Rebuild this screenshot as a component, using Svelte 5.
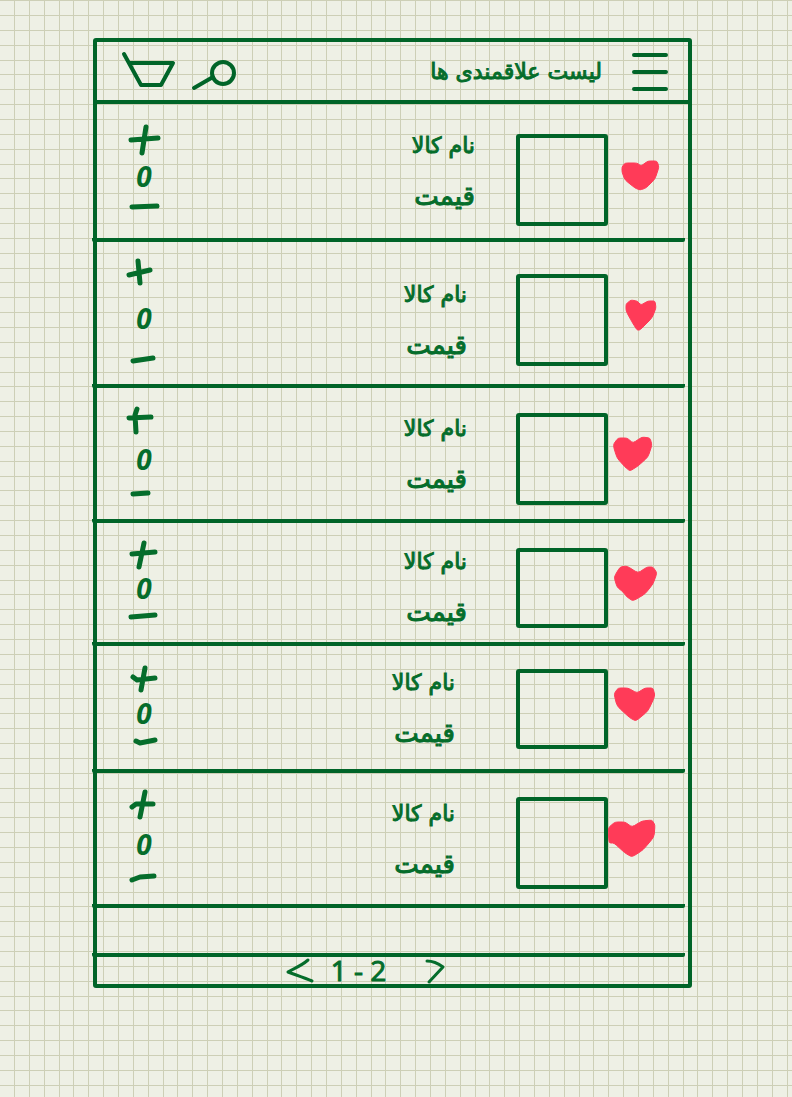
<script>
  const products = [
    {
      thumb: 92, drop: 18, textDrop: 0, gap: 41, step: 92,
      heart: [[14,16],[17,12],[29,12],[33,15],[40,10],[49,10],[51,16],[47,28],[38,37],[32,39],[27,37],[17,29],[14,21]],
      plus: 'M20 2 16 28M5 15 32 13', minus: 'M6 10 31 9'
    },
    {
      thumb: 92, drop: 14, textDrop: 14, gap: 49, step: 112,
      heart: [[18,13],[23,9],[29,10],[33,14],[40,10],[47,10],[48,17],[44,27],[32,39],[29,39],[24,31],[18,20]],
      plus: 'M12 4 14 26M3 18 24 13', minus: 'M7 12 27 9'
    },
    {
      thumb: 92, drop: 10, textDrop: 0, gap: 49, step: 98,
      heart: [[5,15],[10,8],[19,8],[25,13],[34,7],[42,8],[44,15],[40,27],[30,36],[22,41],[17,37],[9,28]],
      plus: 'M11 4 9 10 10 27M3 13 25 12', minus: 'M7 11 22 10'
    },
    {
      thumb: 80, drop: 10, textDrop: 8, gap: 49, step: 86,
      heart: [[6,18],[12,8],[19,7],[30,14],[39,8],[45,8],[49,14],[45,25],[37,35],[25,42],[19,38],[15,33],[9,28]],
      plus: 'M18 3 13 27M6 14 29 12', minus: 'M5 11 29 9'
    },
    {
      thumb: 80, drop: 2, textDrop: 0, gap: 61, step: 88,
      heart: [[6,14],[10,8],[20,8],[29,13],[37,8],[45,8],[47,16],[40,31],[28,41],[22,38],[9,26]],
      plus: 'M19 4 15 26M7 13 11 16 29 14', minus: 'M10 9 14 11 29 8'
    },
    {
      thumb: 92, drop: 8, textDrop: 0, gap: 61, step: 98,
      heart: [[0,14],[7,8],[17,8],[24,13],[34,7],[44,6],[47,11],[46,23],[35,36],[24,43],[17,39],[6,29],[1,29]],
      plus: 'M19 2 14 27M6 17 10 14 27 14', minus: 'M6 12 14 9 28 8'
    }
  ];

  // Closed outline whose corners are rounded over a quarter of each side.
  function blob(points) {
    const n = points.length;
    const toward = (a, b) => `${a[0] + (b[0] - a[0]) / 4} ${a[1] + (b[1] - a[1]) / 4}`;
    return points
      .map((p, i) => {
        const before = points[(i + n - 1) % n];
        const after = points[(i + 1) % n];
        return `${i ? 'L' : 'M'}${toward(p, before)}Q${p[0]} ${p[1]} ${toward(p, after)}`;
      })
      .join('') + 'Z';
  }

  let counts = $state(products.map(() => 0));
</script>

<main lang="fa" dir="rtl">
  <div class="frame">
    <header>
      <button class="menu" aria-label="منو">
        <svg width="36" height="40" viewBox="0 0 36 40"><path d="M2 3H34M2 20H34M2 37H34" /></svg>
      </button>
      <h1>لیست علاقمندی ها</h1>
      <button aria-label="جستجو">
        <svg width="46" height="40" viewBox="0 0 46 40"><circle cx="32" cy="21" r="11" /><path d="M22 25 3 36" /></svg>
      </button>
      <button aria-label="سبد خرید">
        <svg width="56" height="40" viewBox="0 0 56 40"><path d="M3 2 20 33H40L52 11H9" /></svg>
      </button>
    </header>

    <ul>
      {#each products as item, i}
        <li>
          <div class="media" style:padding-top="{item.drop}px">
            <button class="heart" aria-label="علاقمندی">
              <svg width="56" height="48" viewBox="0 0 56 48"><path d={blob(item.heart)} /></svg>
            </button>
            <div class="thumb" style:height="{item.thumb}px"></div>
          </div>
          <div class="text" style:padding-top="{item.textDrop}px" style:margin-right="{item.gap}px">
            <h2>نام کالا</h2>
            <p>قیمت</p>
          </div>
          <div class="stepper" style:height="{item.step}px">
            <button aria-label="افزایش" onclick={() => counts[i]++}>
              <svg width="36" height="30" viewBox="0 0 36 30"><path d={item.plus} /></svg>
            </button>
            <output>{counts[i]}</output>
            <button aria-label="کاهش" onclick={() => (counts[i] = Math.max(0, counts[i] - 1))}>
              <svg width="36" height="20" viewBox="0 0 36 20"><path d={item.minus} /></svg>
            </button>
          </div>
        </li>
      {/each}
      <li class="blank"></li>
    </ul>

    <nav dir="ltr">
      <button aria-label="صفحه قبل">
        <svg width="30" height="24" viewBox="0 0 30 24"><path d="M23 1C15 8 7 10 3 13C11 16 20 19 27 22" /></svg>
      </button>
      <span>1 - 2</span>
      <button aria-label="صفحه بعد">
        <svg width="22" height="26" viewBox="0 0 22 26"><path d="M3 3C8 3 15 6 19 9L5 24" /></svg>
      </button>
    </nav>
  </div>
</main>

<style>
  :global(body) {
    margin: 0;
    background-color: #eef0e5;
    /* Squared paper: seven cells for every 104 pixels */
    background-image:
      linear-gradient(to right, transparent 14px, #cdcfb6 14px 15px, transparent 15px 29px, #cdcfb6 29px 30px, transparent 30px 44px, #cdcfb6 44px 45px, transparent 45px 59px, #cdcfb6 59px 60px, transparent 60px 73px, #cdcfb6 73px 74px, transparent 74px 88px, #cdcfb6 88px 89px, transparent 89px 103px, #cdcfb6 103px 104px),
      linear-gradient(to bottom, #cdcfb6 0 1px, transparent 1px 15px, #cdcfb6 15px 16px, transparent 16px 30px, #cdcfb6 30px 31px, transparent 31px 45px, #cdcfb6 45px 46px, transparent 46px 60px, #cdcfb6 60px 61px, transparent 61px 74px, #cdcfb6 74px 75px, transparent 75px 89px, #cdcfb6 89px 90px, transparent 90px);
    background-size: 104px 104px;
  }
  main {
    --line: #006428;
    --ink: #056d2b;
    padding: 38px 100px 109px 93px;
    color: var(--ink);
    font-family: "DejaVu Sans", sans-serif;
  }
  .frame {
    border: 4px solid var(--line);
    border-radius: 3px;
  }
  button {
    display: block;
    padding: 0;
    border: 0;
    background: none;
    color: inherit;
    cursor: pointer;
  }
  svg {
    display: block;
    fill: none;
    stroke: var(--ink);
    stroke-width: 4;
    stroke-linecap: round;
    stroke-linejoin: round;
    overflow: visible;
  }
  header svg { stroke: var(--line); }
  header {
    display: flex;
    align-items: center;
    gap: 14px;
    height: 56px;
    padding: 2px 20px 0 24px;
    border-bottom: 4px solid var(--line);
  }
  .menu { margin-left: 16px; }
  h1, h2, p, ul { margin: 0; padding: 0; }
  h1, h2, p {
    font-weight: normal;
    -webkit-text-stroke: 1px var(--ink);
  }
  h1 {
    flex: 1;
    font-size: 22px;
    line-height: 40px;
  }
  ul {
    display: grid;
    grid-template-rows: 138px 146px 135px 123px 127px 135px 49px;
    margin: 0 3px 0 -5px;
    list-style: none;
  }
  li {
    display: flex;
    align-items: center;
    padding: 0 21px 0 34px;
    border-bottom: 4px solid var(--line);
    border-radius: 2px;
  }
  .media {
    display: flex;
    align-items: center;
  }
  .heart { padding-bottom: 10px; }
  .heart svg {
    fill: #ff3b58;
    stroke: #ff3b58;
    stroke-width: 1;
  }
  .thumb {
    box-sizing: border-box;
    width: 92px;
    border: 4px solid var(--line);
    border-radius: 3px;
  }
  .text {
    flex: 1;
  }
  h2, p {
    font-size: 22px;
    line-height: 50px;
  }
  p { font-size: 26px; }
  .stepper {
    display: flex;
    flex-direction: column;
    justify-content: space-between;
    align-items: center;
  }
  .stepper svg { stroke-width: 5; }
  output {
    font: italic bold 28px/28px "Open Sans", sans-serif;
  }
  nav {
    display: flex;
    align-items: center;
    justify-content: center;
    height: 27px;
    padding-right: 54px;
  }
  nav svg { stroke-width: 3; }
  nav span {
    margin: 0 38px 0 16px;
    font: 28px/27px "Open Sans", sans-serif;
    -webkit-text-stroke: 1px var(--ink);
  }
</style>
